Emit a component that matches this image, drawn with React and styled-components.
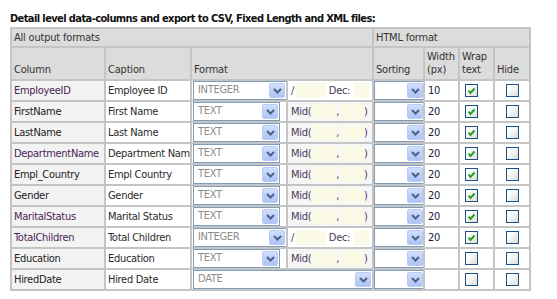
import React from 'react';
import styled, { createGlobalStyle } from 'styled-components';

const GlobalStyle = createGlobalStyle`
  body {
    margin: 0;
    padding: 0;
    background: #fff;
    font-family: 'DejaVu Sans Condensed', 'DejaVu Sans', Verdana, sans-serif;
    font-size: 11px;
    color: #222;
  }
`;

const Page = styled.div`
  padding: 13px 10px 0 10px;
`;

const Title = styled.div`
  font-weight: bold;
  font-size: 11px;
  letter-spacing: -0.6px;
  color: #111;
  height: 14px;
  line-height: 12px;
`;

const Table = styled.table`
  table-layout: fixed;
  width: 521px;
  border-collapse: separate;
  border-spacing: 0;
  border-left: 2px solid #c4c4c4;
  border-top: 2px solid #c4c4c4;
`;

const Th = styled.th`
  background: #dcdcdc;
  font-weight: normal;
  text-align: left;
  color: #333;
  letter-spacing: -0.2px;
  border-right: 2px solid #c4c4c4;
  border-bottom: 2px solid #c4c4c4;
  padding: 0 2px ${p => (p.$top ? '0' : '3px')} 2px;
  height: ${p => (p.$top ? '19px' : '33px')};
  vertical-align: ${p => (p.$top ? 'middle' : 'bottom')};
  line-height: 13px;
  box-sizing: border-box;
`;

const Td = styled.td`
  background: ${p => p.$bg || '#fff'};
  color: ${p => p.$color || '#222'};
  letter-spacing: -0.3px;
  border-right: 2px solid #c4c4c4;
  border-bottom: 2px solid #c4c4c4;
  padding: 0 ${p => p.$pad ?? 2}px;
  height: 19px;
  white-space: nowrap;
  overflow: hidden;
  vertical-align: middle;
`;

const SelectBox = styled.div`
  position: relative;
  box-sizing: border-box;
  width: ${p => p.$w}px;
  height: 19px;
  border: 1px solid #7f9db9;
  box-shadow: inset 0 0 0 1px #fff;
  background: #fff;
  color: #8c8c8c;
  line-height: 16px;
  padding-left: 4px;
  font-size: 11px;
`;

const ArrowBtn = styled.div`
  position: absolute;
  right: 1px;
  top: 1px;
  bottom: 1px;
  width: 16px;
  box-sizing: border-box;
  border: 1px solid #b7cbf6;
  border-radius: 2px;
  background: linear-gradient(180deg, #d3e0fd 0%, #bccff9 55%, #aec4f5 100%);
  display: flex;
  align-items: center;
  justify-content: center;
`;

const Params = styled.div`
  display: flex;
  align-items: center;
  color: #4a3a5a;
`;

const Field = styled.span`
  display: inline-block;
  width: ${p => p.$w}px;
  height: 15px;
  background: #fafae6;
  margin: 0 ${p => p.$mr ?? 0}px 0 ${p => p.$ml ?? 0}px;
`;

const Check = styled.div`
  box-sizing: border-box;
  width: 13px;
  height: 13px;
  border: 1px solid #1c5180;
  background: linear-gradient(135deg, #ffffff 25%, #dcdcd7 100%);
  margin-left: ${p => p.$ml}px;
  display: flex;
  align-items: center;
  justify-content: center;
`;

const Chevron = () => (
  <svg width="9" height="6" viewBox="0 0 9 6">
    <polyline points="1,1 4.5,4.5 8,1" fill="none" stroke="#4d6185" strokeWidth="2" />
  </svg>
);

const Tick = () => (
  <svg width="9" height="8" viewBox="0 0 9 8">
    <polyline points="1.5,3.5 3.5,6 7.5,1.5" fill="none" stroke="#21a121" strokeWidth="2" />
  </svg>
);

function Select({ w, value }) {
  return (
    <SelectBox $w={w}>
      {value}
      <ArrowBtn><Chevron /></ArrowBtn>
    </SelectBox>
  );
}

function CheckBox({ checked, ml }) {
  return <Check $ml={ml}>{checked && <Tick />}</Check>;
}

const rows = [
  { col: 'EmployeeID', cap: 'Employee ID', fmt: 'INTEGER', kind: 'num', width: '10', wrap: true, purple: true },
  { col: 'FirstName', cap: 'First Name', fmt: 'TEXT', kind: 'mid', width: '20', wrap: true },
  { col: 'LastName', cap: 'Last Name', fmt: 'TEXT', kind: 'mid', width: '20', wrap: true },
  { col: 'DepartmentName', cap: 'Department Name', fmt: 'TEXT', kind: 'mid', width: '20', wrap: true, purple: true },
  { col: 'Empl_Country', cap: 'Empl Country', fmt: 'TEXT', kind: 'mid', width: '20', wrap: true },
  { col: 'Gender', cap: 'Gender', fmt: 'TEXT', kind: 'mid', width: '20', wrap: true },
  { col: 'MaritalStatus', cap: 'Marital Status', fmt: 'TEXT', kind: 'mid', width: '20', wrap: true, purple: true },
  { col: 'TotalChildren', cap: 'Total Children', fmt: 'INTEGER', kind: 'num', width: '20', wrap: true, purple: true },
  { col: 'Education', cap: 'Education', fmt: 'TEXT', kind: 'mid', width: '', wrap: false },
  { col: 'HiredDate', cap: 'Hired Date', fmt: 'DATE', kind: 'date', width: '', wrap: false },
];

export default function App() {
  return (
    <>
      <GlobalStyle />
      <Page>
        <Title>Detail level data-columns and export to CSV, Fixed Length and XML files:</Title>
        <Table>
          <colgroup>
            <col style={{ width: 94 }} />
            <col style={{ width: 86 }} />
            <col style={{ width: 96 }} />
            <col style={{ width: 86 }} />
            <col style={{ width: 51 }} />
            <col style={{ width: 35 }} />
            <col style={{ width: 35 }} />
            <col style={{ width: 36 }} />
          </colgroup>
          <thead>
            <tr>
              <Th $top colSpan={4}>All output formats</Th>
              <Th $top colSpan={4}>HTML format</Th>
            </tr>
            <tr>
              <Th>Column</Th>
              <Th>Caption</Th>
              <Th colSpan={2}>Format</Th>
              <Th>Sorting</Th>
              <Th>Width<br />(px)</Th>
              <Th>Wrap<br />text</Th>
              <Th>Hide</Th>
            </tr>
          </thead>
          <tbody>
            {rows.map(r => (
              <tr key={r.col}>
                <Td $bg="#f3f3f3" $color={r.purple ? '#4a1d55' : '#222'}>{r.col}</Td>
                <Td $color="#2a2a2a">{r.cap}</Td>
                {r.kind === 'date' ? (
                  <Td colSpan={2} $pad={1}><Select w={180} value={r.fmt} /></Td>
                ) : (
                  <>
                    <Td $pad={1}><Select w={r.kind === 'num' ? 94 : 87} value={r.fmt} /></Td>
                    <Td $bg={r.kind === 'mid' ? '#f6f6f6' : '#fff'} $pad={3}>
                      {r.kind === 'num' ? (
                        <Params>/<Field $w={30} $ml={2} $mr={3} />Dec:<Field $w={15} $ml={4} /></Params>
                      ) : (
                        <Params>Mid(<Field $w={25} />,<Field $w={25} />)</Params>
                      )}
                    </Td>
                  </>
                )}
                <Td $pad={0}><Select w={51} value="" /></Td>
                <Td $pad={3} $color="#1a1a3a">{r.width}</Td>
                <Td $pad={0}><CheckBox checked={r.wrap} ml={5} /></Td>
                <Td $pad={0}><CheckBox ml={11} /></Td>
              </tr>
            ))}
          </tbody>
        </Table>
      </Page>
    </>
  );
}
